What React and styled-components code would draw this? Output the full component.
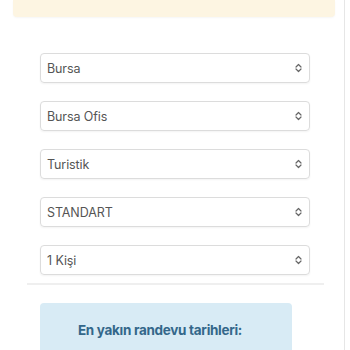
import React from 'react';
import styled, { createGlobalStyle } from 'styled-components';

const GlobalStyle = createGlobalStyle`
  html, body {
    margin: 0;
    padding: 0;
    background: #fff;
    font-family: Inter, "Noto Sans", sans-serif;
  }
`;

const Page = styled.div`
  width: 345px;
  height: 350px;
  overflow: hidden;
  border-right: 1px solid #e6e6e6;
  box-sizing: border-box;
`;

const Banner = styled.div`
  margin: 0 9px 0 13px;
  height: 17px;
  background: #fdf5e2;
  border-radius: 0 0 4px 4px;
  box-shadow: 0 1px 2px rgba(0, 0, 0, 0.04);
`;

const Form = styled.div`
  display: flex;
  flex-direction: column;
  gap: 18px;
  padding: 36px 34px 0 40px;
`;

const SelectBox = styled.div`
  height: 30px;
  box-sizing: border-box;
  border: 1px solid #dcdcdc;
  border-radius: 4px;
  display: flex;
  align-items: center;
  justify-content: space-between;
  padding: 0 6px 0 6px;
  font-size: 12.5px;
  color: #555;
  letter-spacing: -0.1px;
  box-shadow: 0 1px 2px rgba(0, 0, 0, 0.05);
`;

const Divider = styled.hr`
  margin: 8px 20px 0 27px;
  border: none;
  height: 2px;
  background: #efefef;
`;

const InfoBox = styled.div`
  margin: 18px 52px 0 40px;
  height: 60px;
  background: #d8ebf5;
  border-radius: 4px;
  display: flex;
  justify-content: center;
  padding: 19px 12px 0 0;
  box-sizing: border-box;
`;

const InfoTitle = styled.div`
  font-size: 13.5px;
  font-weight: 700;
  color: #33678a;
  letter-spacing: -0.3px;
`;

const Chevrons = () => (
  <svg width="9" height="10" viewBox="0 0 9 10" fill="none" stroke="#666" strokeWidth="1.2" strokeLinecap="round" strokeLinejoin="round">
    <polyline points="2,4 4.5,1.5 7,4" />
    <polyline points="2,6 4.5,8.5 7,6" />
  </svg>
);

const options = ['Bursa', 'Bursa Ofis', 'Turistik', 'STANDART', '1 Kişi'];

export default function App() {
  return (
    <Page>
      <GlobalStyle />
      <Banner />
      <Form>
        {options.map((o) => (
          <SelectBox key={o}>
            <span>{o}</span>
            <Chevrons />
          </SelectBox>
        ))}
      </Form>
      <Divider />
      <InfoBox>
        <InfoTitle>En yakın randevu tarihleri:</InfoTitle>
      </InfoBox>
    </Page>
  );
}
